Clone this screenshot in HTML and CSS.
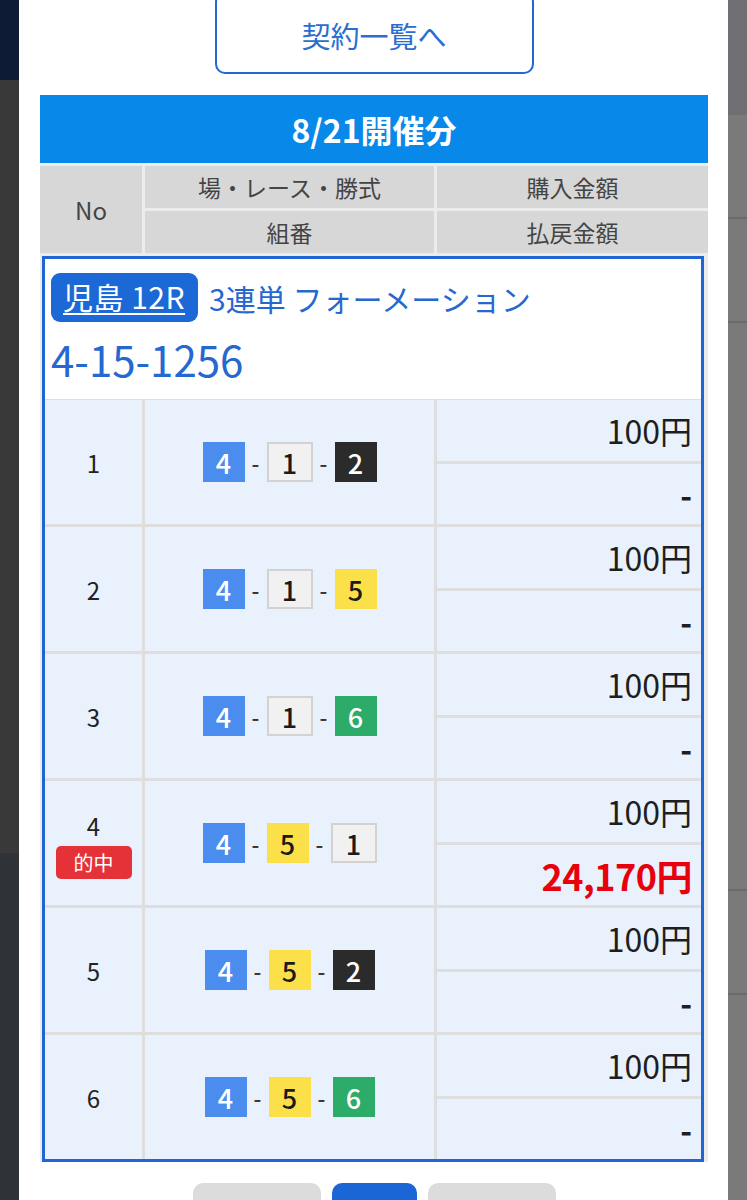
FILE: index.html
```html
<!DOCTYPE html>
<html lang="ja">
<head>
    <meta charset="UTF-8">
    <meta name="viewport" content="width=device-width, initial-scale=1.0">
    <title>契約詳細</title>
    <link rel="stylesheet" href="styles.css">
</head>
<body>

    <div class="page">
        <!-- 背景（左） -->
        <div class="backdrop backdrop--left">
            <div class="backdrop__navy"></div>
            <div class="backdrop__dark"></div>
        </div>

        <!-- モーダル -->
        <div class="modal">
            <a class="modal__back" href="#">契約一覧へ</a>

            <div class="sheet">
                <div class="sheet__title">8/21開催分</div>

                <div class="sheet__head">
                    <div class="sheet__head-cell sheet__head-cell--no">No</div>
                    <div class="sheet__head-cell">場・レース・勝式</div>
                    <div class="sheet__head-cell">購入金額</div>
                    <div class="sheet__head-cell">組番</div>
                    <div class="sheet__head-cell">払戻金額</div>
                </div>

                <div class="entry">
                    <div class="entry__info">
                        <div class="entry__race">
                            <a class="entry__place" href="#">児島 12R</a>
                            <span>3連単 フォーメーション</span>
                        </div>
                        <div class="entry__formation">4-15-1256</div>
                    </div>

                    <div class="entry__rows">
                        <div class="bet">
                            <div class="bet__no">1</div>
                            <div class="bet__combo">
                                <span class="boat boat--4">4</span><span class="dash">-</span><span class="boat boat--1">1</span><span class="dash">-</span><span class="boat boat--2">2</span>
                            </div>
                            <div class="bet__money">
                                <div class="bet__price">100円</div>
                                <div class="bet__payout">-</div>
                            </div>
                        </div>

                        <div class="bet">
                            <div class="bet__no">2</div>
                            <div class="bet__combo">
                                <span class="boat boat--4">4</span><span class="dash">-</span><span class="boat boat--1">1</span><span class="dash">-</span><span class="boat boat--5">5</span>
                            </div>
                            <div class="bet__money">
                                <div class="bet__price">100円</div>
                                <div class="bet__payout">-</div>
                            </div>
                        </div>

                        <div class="bet">
                            <div class="bet__no">3</div>
                            <div class="bet__combo">
                                <span class="boat boat--4">4</span><span class="dash">-</span><span class="boat boat--1">1</span><span class="dash">-</span><span class="boat boat--6">6</span>
                            </div>
                            <div class="bet__money">
                                <div class="bet__price">100円</div>
                                <div class="bet__payout">-</div>
                            </div>
                        </div>

                        <div class="bet">
                            <div class="bet__no">
                                4
                                <span class="bet__hit">的中</span>
                            </div>
                            <div class="bet__combo">
                                <span class="boat boat--4">4</span><span class="dash">-</span><span class="boat boat--5">5</span><span class="dash">-</span><span class="boat boat--1">1</span>
                            </div>
                            <div class="bet__money">
                                <div class="bet__price">100円</div>
                                <div class="bet__payout bet__payout--hit">24,170円</div>
                            </div>
                        </div>

                        <div class="bet">
                            <div class="bet__no">5</div>
                            <div class="bet__combo">
                                <span class="boat boat--4">4</span><span class="dash">-</span><span class="boat boat--5">5</span><span class="dash">-</span><span class="boat boat--2">2</span>
                            </div>
                            <div class="bet__money">
                                <div class="bet__price">100円</div>
                                <div class="bet__payout">-</div>
                            </div>
                        </div>

                        <div class="bet">
                            <div class="bet__no">6</div>
                            <div class="bet__combo">
                                <span class="boat boat--4">4</span><span class="dash">-</span><span class="boat boat--5">5</span><span class="dash">-</span><span class="boat boat--6">6</span>
                            </div>
                            <div class="bet__money">
                                <div class="bet__price">100円</div>
                                <div class="bet__payout">-</div>
                            </div>
                        </div>
                    </div>
                </div>
            </div>

            <!-- ページ送り -->
            <div class="pager">
                <span class="pager__btn"></span>
                <span class="pager__btn pager__btn--current"></span>
                <span class="pager__btn"></span>
            </div>
        </div>

        <!-- 背景（右） -->
        <div class="backdrop backdrop--right">
            <div class="backdrop__gray-top"></div>
            <div class="backdrop__line"></div>
            <div class="backdrop__line"></div>
            <div class="backdrop__line backdrop__line--tall"></div>
            <div class="backdrop__line"></div>
        </div>
    </div>

</body>
</html>
```

FILE: styles.css
```css
body {
    margin: 0;
    padding: 0;
    font-family: "Noto Sans CJK JP", "Noto Sans", sans-serif;
    color: #222;
    background: #3a3a3a;
    overflow: hidden;
}

.page {
    display: flex;
    height: 1200px;
    overflow: hidden;
}

/* 背景のすき間 */
.backdrop {
    width: 19px;
    flex-shrink: 0;
    display: flex;
    flex-direction: column;
}

.backdrop--left {
    background: #2f3237;
}

.backdrop--right {
    background: #7a7a7a;
}

.backdrop__navy {
    height: 80px;
    background: #0d1b35;
}

.backdrop__dark {
    height: 773px;
    background: #393939;
}

.backdrop__gray-top {
    height: 115px;
    background: #707074;
}

.backdrop__line {
    height: 102px;
    border-bottom: 2px solid #6a6a6a;
}

.backdrop__line--tall {
    height: 566px;
}

/* モーダル */
.modal {
    flex: 1;
    background: #ffffff;
    padding: 0 20px 0 21px;
}

.modal__back {
    display: flex;
    justify-content: center;
    align-items: center;
    width: 319px;
    height: 82px;
    margin: -8px auto 0;
    border: 2px solid #2168d0;
    border-radius: 10px;
    color: #2a6ed2;
    font-size: 29px;
    text-decoration: none;
    padding-top: 3px;
    box-sizing: border-box;
}

.sheet {
    margin-top: 21px;
    background: #ececec;
}

.sheet__title {
    height: 68px;
    background: #0888e8;
    color: #ffffff;
    font-size: 32px;
    font-weight: bold;
    display: flex;
    justify-content: center;
    align-items: center;
}

.sheet__head {
    display: grid;
    grid-template-columns: 102px 289px 1fr;
    grid-template-rows: 42px 42px;
    gap: 3px;
    padding: 3px 0 0;
}

.sheet__head-cell {
    background: #d7d7d7;
    color: #444;
    font-size: 23px;
    display: flex;
    justify-content: center;
    align-items: center;
}

.sheet__head-cell--no {
    grid-row: span 2;
    font-size: 24px;
}

/* 選択中の買い目 */
.entry {
    margin: 3px 4px 0 2px;
    border: 3px solid #1f66d4;
    background: #dedede;
}

.entry__info {
    background: #ffffff;
    padding: 14px 6px 0;
    height: 126px;
    color: #2468d0;
}

.entry__race {
    display: flex;
    align-items: center;
    gap: 11px;
    font-size: 30px;
}

.entry__place {
    background: #1c68d6;
    color: #ffffff;
    border-radius: 9px;
    padding: 0 13px 0 12px;
    height: 49px;
    line-height: 47px;
    letter-spacing: 0.5px;
    text-decoration: underline;
    text-decoration-thickness: 2px;
    text-underline-offset: 4px;
}

.entry__formation {
    font-size: 42px;
    margin-top: 14px;
    line-height: 46px;
}

.entry__rows {
    display: flex;
    flex-direction: column;
    gap: 3px;
    padding-top: 1px;
}

.bet {
    display: grid;
    grid-template-columns: 97px 289px 1fr;
    gap: 3px;
    height: 124px;
}

.bet > div {
    background: #e8f1fc;
}

.bet__no {
    display: flex;
    flex-direction: column;
    justify-content: center;
    align-items: center;
    font-size: 24px;
    gap: 3px;
}

.bet__hit {
    background: #e53238;
    color: #ffffff;
    font-size: 20px;
    border-radius: 5px;
    width: 76px;
    height: 33px;
    line-height: 33px;
    text-align: center;
}

.bet__combo {
    display: flex;
    justify-content: center;
    align-items: center;
}

.boat {
    width: 42px;
    height: 40px;
    display: flex;
    justify-content: center;
    align-items: center;
    font-size: 27px;
    font-weight: 500;
    box-sizing: border-box;
}

.boat--1 {
    background: #f1f1f1;
    border: 2px solid #d2d2d2;
    width: 46px;
    color: #1a1a1a;
}

.boat--2 {
    background: #2b2b2b;
    color: #ffffff;
}

.boat--4 {
    background: #4a8def;
    color: #ffffff;
}

.boat--5 {
    background: #fbe04a;
    color: #1a1a1a;
}

.boat--6 {
    background: #2dab68;
    color: #ffffff;
}

.dash {
    width: 22px;
    text-align: center;
    font-size: 22px;
    font-weight: 500;
    color: #333;
}

.bet__money {
    display: flex;
    flex-direction: column;
    gap: 3px;
    background: #dedede !important;
}

.bet__price,
.bet__payout {
    flex: 1;
    background: #e8f1fc;
    display: flex;
    justify-content: flex-end;
    align-items: center;
    padding-right: 9px;
}

.bet__price {
    font-size: 32px;
    color: #1e1e1e;
}

.bet__payout {
    font-size: 32px;
    font-weight: bold;
    color: #1e1e1e;
}

.bet__payout--hit {
    color: #e8000c;
    font-size: 36px;
    letter-spacing: -0.5px;
}

/* ページ送り */
.pager {
    display: flex;
    justify-content: center;
    gap: 11px;
    margin-top: 21px;
}

.pager__btn {
    width: 128px;
    height: 60px;
    border-radius: 10px;
    background: #dcdcdc;
}

.pager__btn--current {
    width: 85px;
    background: #1a66d6;
}
```
